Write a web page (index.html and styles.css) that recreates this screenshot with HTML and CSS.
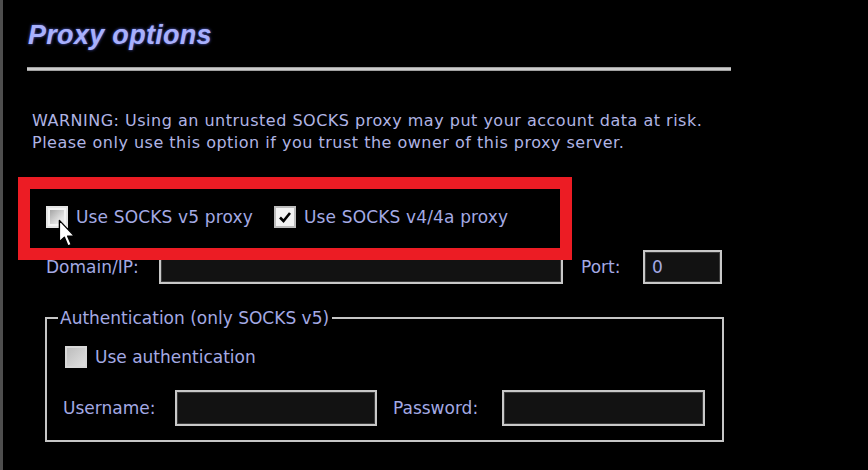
FILE: index.html
```html
<!DOCTYPE html>
<html lang="en">
<head>
  <meta charset="UTF-8">
  <meta name="viewport" content="width=device-width, initial-scale=1.0">
  <title>Proxy options</title>
  <link rel="stylesheet" href="styles.css">
</head>
<body>
  <div class="panel">
    <h1 class="title">Proxy options</h1>
    <div class="rule"></div>

    <p class="warning">WARNING: Using an untrusted SOCKS proxy may put your account data at risk.<br>Please only use this option if you trust the owner of this proxy server.</p>

    <!-- SOCKS version -->
    <div class="check-row proxy-types">
      <label class="check"><span class="box box-hover"></span>Use SOCKS v5 proxy</label>
      <label class="check"><span class="box box-checked">
        <svg viewBox="0 0 16 16" width="16" height="16"><path d="M3 8.5 L6.5 12 L13 4" fill="none" stroke="#000" stroke-width="2.6"/></svg>
      </span>Use SOCKS v4/4a proxy</label>
    </div>

    <div class="field-row server-row">
      <span class="label domain-label">Domain/IP:</span>
      <span class="input domain-input"></span>
      <span class="label port-label">Port:</span>
      <span class="input port-input">0</span>
    </div>

    <fieldset class="auth">
      <legend>Authentication (only SOCKS v5)</legend>
      <div class="check-row auth-check">
        <label class="check"><span class="box box-disabled"></span>Use authentication</label>
      </div>
      <div class="field-row cred-row">
        <span class="label user-label">Username:</span>
        <span class="input cred-input"></span>
        <span class="label pass-label">Password:</span>
        <span class="input cred-input pass-input"></span>
      </div>
    </fieldset>

    <!-- annotation + mouse pointer drawn over the dialog -->
    <div class="highlight"></div>
    <svg class="cursor" viewBox="0 0 13 21" width="18" height="29">
      <path d="M1 1 L1 16.5 L4.6 13.2 L7.2 19.5 L9.6 18.5 L7 12.4 L11.8 12.4 Z" fill="#fff" stroke="#000" stroke-width="1" stroke-linejoin="round"/>
    </svg>
  </div>
</body>
</html>
```

FILE: styles.css
```css
body {
  margin: 0;
  padding: 0;
  background-color: #000;
  font-family: "DejaVu Sans", sans-serif;
  color: #a4aae4;
}

.panel {
  position: relative;
  height: 470px;
  box-sizing: border-box;
  border-left: 3px solid #4e4e4e;
  padding-left: 24px;
  overflow: hidden;
}

.title {
  margin: 19px 0 0 1px;
  font-family: "Liberation Sans", Arial, sans-serif;
  font-size: 27px;
  font-weight: bold;
  font-style: italic;
  line-height: 32px;
  letter-spacing: 0.3px;
  color: #a8b0fc;
  text-shadow: 0 0 3px #5462d8;
}

.rule {
  margin-top: 16px;
  width: 704px;
  height: 4px;
  background: linear-gradient(#8a8a8a, #e2e2e2 50%, #8a8a8a);
}

.warning {
  margin: 39px 0 0 5px;
  font-size: 16px;
  line-height: 22px;
  letter-spacing: 0.5px;
  color: #b0b4e4;
}

.check-row {
  display: flex;
  align-items: center;
  height: 22px;
  font-size: 17px;
}

.proxy-types {
  margin-top: 52px;
  padding-left: 19px;
  gap: 21px;
}

.proxy-types .check {
  letter-spacing: 0.15px;
}

.check {
  display: flex;
  align-items: center;
  gap: 8px;
}

.box {
  width: 22px;
  height: 22px;
  box-sizing: border-box;
  display: flex;
  align-items: center;
  justify-content: center;
}

.box-hover {
  border: 2px solid #e4e4e4;
  background: linear-gradient(135deg, #9a9a9a, #e8e8e8 70%);
  box-shadow: inset 0 0 0 2px #f4f4f4;
}

.box-checked {
  border: 2px solid #bcbcbc;
  background-color: #f2f2f2;
}

.box-disabled {
  border: 2px solid #d8d8d8;
  background: linear-gradient(135deg, #bdbdbd, #e0e0e0);
}

.field-row {
  display: flex;
  align-items: center;
  font-size: 17px;
}

.server-row {
  margin-top: 22px;
  padding-left: 19px;
  height: 34px;
}

.input {
  box-sizing: border-box;
  height: 34px;
  background-color: #121212;
  border: 2px solid #c8c8c8;
  box-shadow: inset 0 0 0 1px #3a3a3a;
  padding-left: 7px;
  line-height: 30px;
}

.domain-label {
  width: 113px;
}

.domain-input {
  width: 404px;
}

.port-label {
  width: 62px;
  margin-left: 18px;
}

.port-input {
  width: 79px;
}

.auth {
  margin: 24px 0 0 18px;
  width: 679px;
  box-sizing: border-box;
  border: 2px solid #c6c6c6;
  padding: 0 0 14px 11px;
}

.auth legend {
  padding: 0 3px 0 2px;
  font-size: 17px;
  line-height: 20px;
}

.auth-check {
  margin-top: 18px;
  margin-left: 7px;
}

.cred-row {
  margin-top: 22px;
  margin-left: 5px;
  height: 36px;
}

.cred-row .input {
  height: 36px;
}

.user-label {
  width: 112px;
}

.cred-input {
  width: 202px;
}

.pass-label {
  width: 109px;
  margin-left: 16px;
}

.pass-input {
  width: 203px;
}

.highlight {
  position: absolute;
  left: 15px;
  top: 177px;
  width: 554px;
  height: 83px;
  box-sizing: border-box;
  border: 12px solid #ec1c24;
}

.cursor {
  position: absolute;
  left: 55px;
  top: 219px;
}
```
